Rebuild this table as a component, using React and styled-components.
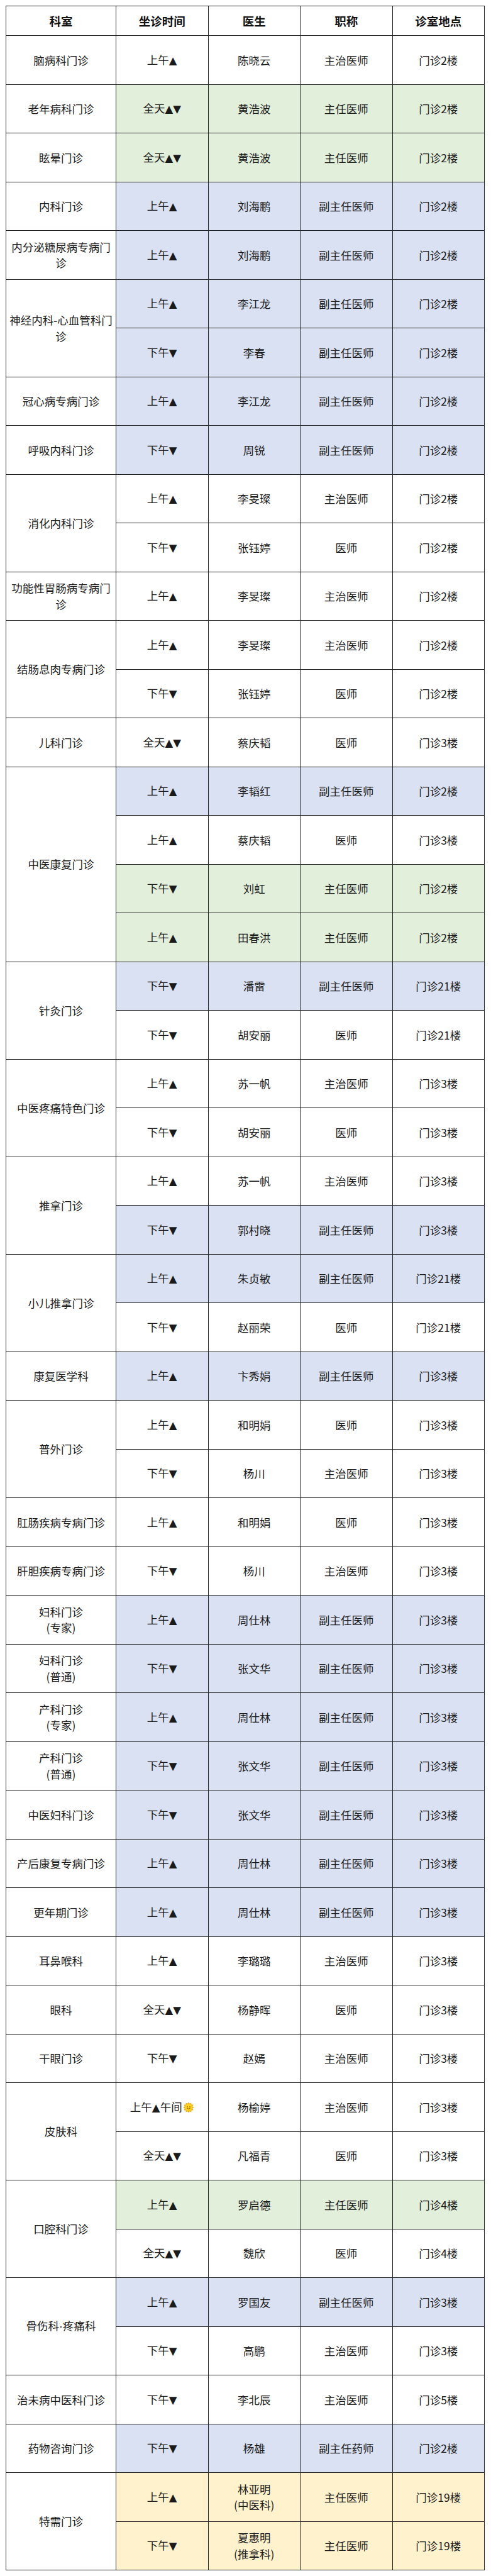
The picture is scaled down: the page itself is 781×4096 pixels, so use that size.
import React from 'react';
import styled, { createGlobalStyle } from 'styled-components';

const GlobalStyle = createGlobalStyle`
  html, body { margin: 0; padding: 0; background: #ffffff; }
  body { font-family: "Noto Sans CJK SC", "Noto Sans", sans-serif; color: #1a1a1a; }
`;

const B = '#D9E1F2';
const G = '#E2EFDA';
const Y = '#FFF2CC';
const W = '#FFFFFF';

const data = [
  ['脑病科门诊', [['上午▲', '陈晓云', '主治医师', '门诊2楼', W]]],
  ['老年病科门诊', [['全天▲▼', '黄浩波', '主任医师', '门诊2楼', G]]],
  ['眩晕门诊', [['全天▲▼', '黄浩波', '主任医师', '门诊2楼', G]]],
  ['内科门诊', [['上午▲', '刘海鹏', '副主任医师', '门诊2楼', B]]],
  ['内分泌糖尿病专病门诊', [['上午▲', '刘海鹏', '副主任医师', '门诊2楼', B]]],
  ['神经内科-心血管科门诊', [
    ['上午▲', '李江龙', '副主任医师', '门诊2楼', B],
    ['下午▼', '李春', '副主任医师', '门诊2楼', B],
  ]],
  ['冠心病专病门诊', [['上午▲', '李江龙', '副主任医师', '门诊2楼', B]]],
  ['呼吸内科门诊', [['下午▼', '周锐', '副主任医师', '门诊2楼', B]]],
  ['消化内科门诊', [
    ['上午▲', '李旻璨', '主治医师', '门诊2楼', W],
    ['下午▼', '张钰婷', '医师', '门诊2楼', W],
  ]],
  ['功能性胃肠病专病门诊', [['上午▲', '李旻璨', '主治医师', '门诊2楼', W]]],
  ['结肠息肉专病门诊', [
    ['上午▲', '李旻璨', '主治医师', '门诊2楼', W],
    ['下午▼', '张钰婷', '医师', '门诊2楼', W],
  ]],
  ['儿科门诊', [['全天▲▼', '蔡庆韬', '医师', '门诊3楼', W]]],
  ['中医康复门诊', [
    ['上午▲', '李韬红', '副主任医师', '门诊2楼', B],
    ['上午▲', '蔡庆韬', '医师', '门诊3楼', W],
    ['下午▼', '刘虹', '主任医师', '门诊2楼', G],
    ['上午▲', '田春洪', '主任医师', '门诊2楼', G],
  ]],
  ['针灸门诊', [
    ['下午▼', '潘雷', '副主任医师', '门诊21楼', B],
    ['下午▼', '胡安丽', '医师', '门诊21楼', W],
  ]],
  ['中医疼痛特色门诊', [
    ['上午▲', '苏一帆', '主治医师', '门诊3楼', W],
    ['下午▼', '胡安丽', '医师', '门诊3楼', W],
  ]],
  ['推拿门诊', [
    ['上午▲', '苏一帆', '主治医师', '门诊3楼', W],
    ['下午▼', '郭村晓', '副主任医师', '门诊3楼', B],
  ]],
  ['小儿推拿门诊', [
    ['上午▲', '朱贞敏', '副主任医师', '门诊21楼', B],
    ['下午▼', '赵丽荣', '医师', '门诊21楼', W],
  ]],
  ['康复医学科', [['上午▲', '卞秀娟', '副主任医师', '门诊3楼', B]]],
  ['普外门诊', [
    ['上午▲', '和明娟', '医师', '门诊3楼', W],
    ['下午▼', '杨川', '主治医师', '门诊3楼', W],
  ]],
  ['肛肠疾病专病门诊', [['上午▲', '和明娟', '医师', '门诊3楼', W]]],
  ['肝胆疾病专病门诊', [['下午▼', '杨川', '主治医师', '门诊3楼', W]]],
  ['妇科门诊\n(专家)', [['上午▲', '周仕林', '副主任医师', '门诊3楼', B]]],
  ['妇科门诊\n(普通)', [['下午▼', '张文华', '副主任医师', '门诊3楼', B]]],
  ['产科门诊\n(专家)', [['上午▲', '周仕林', '副主任医师', '门诊3楼', B]]],
  ['产科门诊\n(普通)', [['下午▼', '张文华', '副主任医师', '门诊3楼', B]]],
  ['中医妇科门诊', [['下午▼', '张文华', '副主任医师', '门诊3楼', B]]],
  ['产后康复专病门诊', [['上午▲', '周仕林', '副主任医师', '门诊3楼', B]]],
  ['更年期门诊', [['上午▲', '周仕林', '副主任医师', '门诊3楼', B]]],
  ['耳鼻喉科', [['上午▲', '李璐璐', '主治医师', '门诊3楼', W]]],
  ['眼科', [['全天▲▼', '杨静晖', '医师', '门诊3楼', W]]],
  ['干眼门诊', [['下午▼', '赵嫣', '主治医师', '门诊3楼', W]]],
  ['皮肤科', [
    ['上午▲午间☀', '杨榆婷', '主治医师', '门诊3楼', W],
    ['全天▲▼', '凡福青', '医师', '门诊3楼', W],
  ]],
  ['口腔科门诊', [
    ['上午▲', '罗启德', '主任医师', '门诊4楼', G],
    ['全天▲▼', '魏欣', '医师', '门诊4楼', W],
  ]],
  ['骨伤科·疼痛科', [
    ['上午▲', '罗国友', '副主任医师', '门诊3楼', B],
    ['下午▼', '高鹏', '主治医师', '门诊3楼', W],
  ]],
  ['治未病中医科门诊', [['下午▼', '李北辰', '主治医师', '门诊5楼', W]]],
  ['药物咨询门诊', [['下午▼', '杨雄', '副主任药师', '门诊2楼', B]]],
  ['特需门诊', [
    ['上午▲', '林亚明\n(中医科)', '主任医师', '门诊19楼', Y],
    ['下午▼', '夏惠明\n(推拿科)', '主任医师', '门诊19楼', Y],
  ]],
];

const Page = styled.div`
  padding: 9px 0 0 9px;
`;

const Grid = styled.div`
  display: grid;
  width: 762px;
  grid-template-columns: 175px repeat(4, 1fr);
  grid-template-rows: 47px;
  grid-auto-rows: 77.5px;
  border-top: 1px solid #222;
  border-left: 1px solid #222;
  box-sizing: border-box;
`;

const Cell = styled.div`
  display: flex;
  align-items: center;
  justify-content: center;
  text-align: center;
  box-sizing: border-box;
  border-right: 1px solid #222;
  border-bottom: 1px solid #222;
  background: ${(p) => p.$bg || '#fff'};
  font-size: 17.5px;
  line-height: 1.45;
  padding: 0 4px;
  white-space: pre-line;
  color: #1a1a1a;
`;

const HeadCell = styled(Cell)`
  font-size: 18.5px;
  font-weight: 700;
  color: #111;
`;

const DeptCell = styled(Cell)`
  grid-column: 1;
  grid-row: span ${(p) => p.$span};
`;

const Mark = styled.span`
  font-family: "DejaVu Sans", sans-serif;
  font-size: 0.95em;
`;

const Dot = styled.span`
  font-family: "Liberation Sans", sans-serif;
`;

const SunWrap = styled.span`
  display: inline-flex;
  vertical-align: -3px;
  margin-left: 1px;
`;

const Sun = () => {
  const rays = [];
  for (let i = 0; i < 12; i++) {
    const a = (i * Math.PI * 2) / 12;
    const a1 = a - 0.22;
    const a2 = a + 0.22;
    const r0 = 6.2;
    const r1 = 8.8;
    rays.push(
      <polygon
        key={i}
        points={`${9 + r0 * Math.cos(a1)},${9 + r0 * Math.sin(a1)} ${9 + r1 * Math.cos(a)},${9 + r1 * Math.sin(a)} ${9 + r0 * Math.cos(a2)},${9 + r0 * Math.sin(a2)}`}
        fill="#F2A200"
      />
    );
  }
  return (
    <SunWrap>
      <svg width="18" height="18" viewBox="0 0 18 18">
        {rays}
        <circle cx="9" cy="9" r="6.4" fill="#FFD21F" stroke="#E89B00" strokeWidth="0.6" />
        <circle cx="7" cy="8" r="0.8" fill="#5a3a00" />
        <circle cx="11" cy="8" r="0.8" fill="#5a3a00" />
        <path d="M6.6 10.4 Q9 12.8 11.4 10.4" fill="none" stroke="#5a3a00" strokeWidth="0.8" strokeLinecap="round" />
      </svg>
    </SunWrap>
  );
};

const TimeText = ({ text }) => {
  const parts = [];
  let buf = '';
  let k = 0;
  for (const ch of text) {
    if (ch === '▲' || ch === '▼') {
      if (buf) parts.push(<span key={k++}>{buf}</span>);
      buf = '';
      parts.push(<Mark key={k++}>{ch}</Mark>);
    } else if (ch === '☀') {
      if (buf) parts.push(<span key={k++}>{buf}</span>);
      buf = '';
      parts.push(<Sun key={k++} />);
    } else {
      buf += ch;
    }
  }
  if (buf) parts.push(<span key={k++}>{buf}</span>);
  return <span>{parts}</span>;
};

const DeptText = ({ text }) => {
  const segs = text.split('·');
  return (
    <span>
      {segs.map((s, i) => (
        <React.Fragment key={i}>
          {i > 0 && <Dot>·</Dot>}
          {s}
        </React.Fragment>
      ))}
    </span>
  );
};

const headers = ['科室', '坐诊时间', '医生', '职称', '诊室地点'];

export default function App() {
  return (
    <>
      <GlobalStyle />
      <Page>
        <Grid>
          {headers.map((h) => (
            <HeadCell key={h}>{h}</HeadCell>
          ))}
          {data.map(([dept, rows], gi) => (
            <React.Fragment key={gi}>
              <DeptCell $span={rows.length}>
                <DeptText text={dept} />
              </DeptCell>
              {rows.map(([time, doc, title, loc, bg], ri) => (
                <React.Fragment key={ri}>
                  <Cell $bg={bg}>
                    <TimeText text={time} />
                  </Cell>
                  <Cell $bg={bg}>{doc}</Cell>
                  <Cell $bg={bg}>{title}</Cell>
                  <Cell $bg={bg}>{loc}</Cell>
                </React.Fragment>
              ))}
            </React.Fragment>
          ))}
        </Grid>
      </Page>
    </>
  );
}
